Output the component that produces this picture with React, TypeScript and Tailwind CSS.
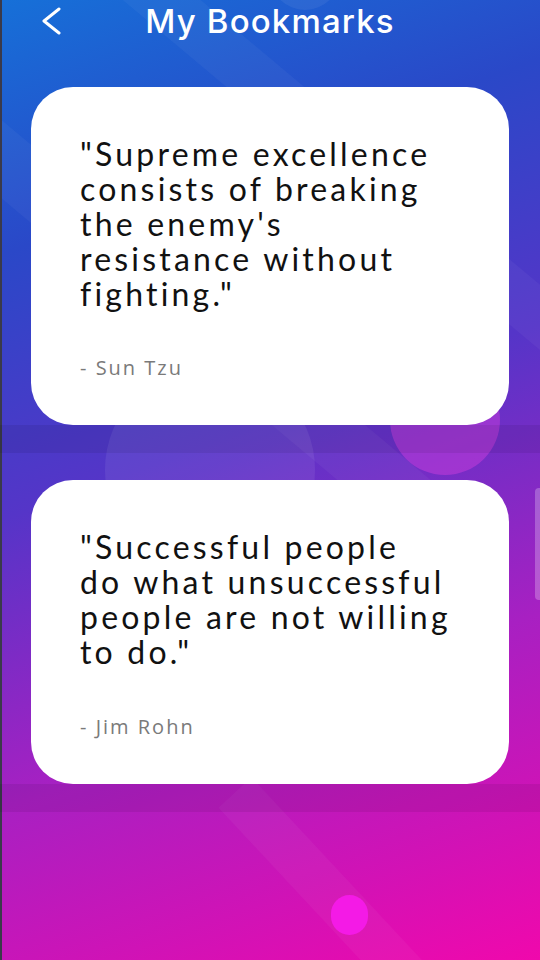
import React from 'react';

const quotes = [
  {
    lines: ['"Supreme excellence', 'consists of breaking', "the enemy's", 'resistance without', 'fighting."'],
    author: '- Sun Tzu',
    h: 'h-[338px]',
  },
  {
    lines: ['"Successful people', 'do what unsuccessful', 'people are not willing', 'to do."'],
    author: '- Jim Rohn',
    h: 'h-[304px]',
  },
];

const QuoteCard = ({ lines, author, h }: { lines: string[]; author: string; h: string }) => (
  <div className="w-full">
    <div className={`mx-[31px] ${h} bg-white rounded-[42px] pl-[49px] pr-[20px] pt-[49px] flex flex-col`}>
      <p className="font-['Lato',sans-serif] text-[32px] leading-[35px] tracking-[0.1em] text-[#111]">
        {lines.map((l, i) => (
          <span key={i} className="block whitespace-nowrap">{l}</span>
        ))}
      </p>
      <p className="mt-auto mb-[42px] font-['Open_Sans',sans-serif] text-[20px] tracking-[0.1em] text-[#7a7a7a]">{author}</p>
    </div>
    <div className="h-[28px] bg-black/[0.07]" />
  </div>
);

export default function App() {
  return (
    <div className="relative w-[540px] h-[960px] overflow-hidden bg-[linear-gradient(160deg,#1670d8_0%,#2a48c8_22%,#5535c8_45%,#a820c2_70%,#f008ac_100%)]">
      {/* background decorations */}
      <div className="absolute inset-0 pointer-events-none">
        <div className="absolute -left-[200px] top-[-40px] w-[900px] h-[60px] rotate-[40deg] origin-left bg-white/[0.04]" />
        <div className="absolute left-[120px] top-[-60px] w-[900px] h-[50px] rotate-[40deg] origin-left bg-white/[0.04]" />
        <div className="absolute left-[235px] top-[770px] w-[380px] h-[45px] rotate-[47deg] origin-left bg-white/[0.04]" />
        <div className="absolute left-[105px] top-[365px] w-[210px] h-[210px] rounded-full bg-white/[0.07]" />
        <div className="absolute left-[390px] top-[365px] w-[110px] h-[110px] rounded-full bg-[#e040e0]/40" />
        <div className="absolute left-[270px] top-[-60px] w-[70px] h-[70px] rounded-full bg-white/[0.06]" />
        <div className="absolute left-[331px] top-[895px] w-[37px] h-[40px] rounded-full bg-[#f41ae6]" />
        <div className="absolute right-0 top-[488px] w-[5px] h-[112px] rounded-l bg-white/25" />
        <div className="absolute left-0 top-0 w-[2px] h-full bg-[#3a3a4a]" />
      </div>

      <div className="relative flex flex-col">
        <header className="h-[42px] grid grid-cols-[1fr_auto_1fr] items-center">
          <div className="pl-[42px] flex items-center">
            <svg width="20" height="28" viewBox="0 0 20 28" fill="none" stroke="white" strokeWidth="3" strokeLinecap="round" strokeLinejoin="round">
              <polyline points="17,2 2,14 17,26" />
            </svg>
          </div>
          <h1 className="font-['Inter',sans-serif] font-medium text-[33px] text-white tracking-[0.035em] leading-none">My Bookmarks</h1>
          <div />
        </header>
        <div className="pt-[45px] flex flex-col gap-[27px]">
          {quotes.map((q, i) => (
            <QuoteCard key={i} {...q} />
          ))}
        </div>
      </div>
    </div>
  );
}
